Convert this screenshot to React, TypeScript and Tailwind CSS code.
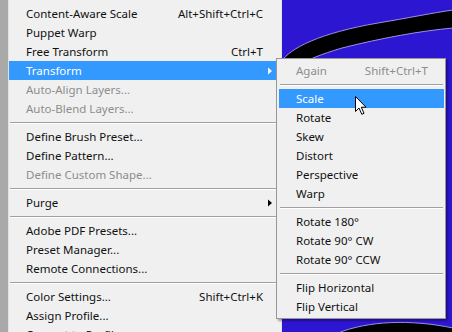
import React from "react";

type Item =
  | { sep: true }
  | { label: string; keys?: string; disabled?: boolean; sub?: boolean; active?: boolean };

const mainItems: Item[] = [
  { label: "Content-Aware Scale", keys: "Alt+Shift+Ctrl+C" },
  { label: "Puppet Warp" },
  { label: "Free Transform", keys: "Ctrl+T" },
  { label: "Transform", sub: true, active: true },
  { label: "Auto-Align Layers...", disabled: true },
  { label: "Auto-Blend Layers...", disabled: true },
  { sep: true },
  { label: "Define Brush Preset..." },
  { label: "Define Pattern..." },
  { label: "Define Custom Shape...", disabled: true },
  { sep: true },
  { label: "Purge", sub: true },
  { sep: true },
  { label: "Adobe PDF Presets..." },
  { label: "Preset Manager..." },
  { label: "Remote Connections..." },
  { sep: true },
  { label: "Color Settings...", keys: "Shift+Ctrl+K" },
  { label: "Assign Profile..." },
  { label: "Convert to Profile..." },
];

const subItems: Item[] = [
  { label: "Again", keys: "Shift+Ctrl+T", disabled: true },
  { sep: true },
  { label: "Scale", active: true },
  { label: "Rotate" },
  { label: "Skew" },
  { label: "Distort" },
  { label: "Perspective" },
  { label: "Warp" },
  { sep: true },
  { label: "Rotate 180°" },
  { label: "Rotate 90° CW" },
  { label: "Rotate 90° CCW" },
  { sep: true },
  { label: "Flip Horizontal" },
  { label: "Flip Vertical" },
];

function Arrow({ white }: { white?: boolean }) {
  return (
    <svg width="4" height="8" viewBox="0 0 4 8" className="-mr-[9px]">
      <path d="M0 0.5 L4 4 L0 7.5 Z" fill={white ? "#ffffff" : "#000000"} />
    </svg>
  );
}

function Rows({ items, pl, pr }: { items: Item[]; pl: string; pr: string }) {
  return (
    <>
      {items.map((it, i) => {
        if ("sep" in it) {
          return (
            <div key={i} className="h-[9px] shrink-0 flex flex-col justify-center px-[1px]">
              <div className="h-px bg-[#a0a0a0]" />
              <div className="h-px bg-white" />
            </div>
          );
        }
        const color = it.active
          ? "bg-[#3399ff] text-white"
          : it.disabled
          ? "text-[#8d8d8d]"
          : "text-[#111111]";
        return (
          <div
            key={i}
            className={`h-[19px] shrink-0 flex items-center justify-between whitespace-nowrap ${pl} ${pr} ${color}`}
          >
            <span>{it.label}</span>
            {it.keys && <span>{it.keys}</span>}
            {it.sub && <Arrow white={it.active} />}
          </div>
        );
      })}
    </>
  );
}

export default function App() {
  return (
    <div
      className="relative w-[452px] h-[332px] overflow-hidden flex bg-[#2d16d2] text-[11.5px] leading-none"
      style={{ fontFamily: '"Noto Sans", "Open Sans", sans-serif' }}
    >
      {/* window frame strip */}
      <div className="w-[8px] shrink-0 bg-[#a9a9a9]" />

      {/* main Edit menu */}
      <div className="w-[274px] shrink-0 bg-[#f0f0f0] border-l border-[#e2e2e2] border-r border-[#b8b8b8] pt-[4px] pr-[4px] flex flex-col">
        <Rows items={mainItems} pl="pl-[17px]" pr="pr-[14px]" />
      </div>

      {/* canvas art */}
      <div className="relative flex-1">
        <svg className="absolute inset-0" width="170" height="332" viewBox="282 0 170 332">
          <path
            d="M281 62 C290 48 320 33 378 23 C408 18 432 13 453 10 L453 28 C420 31 382 38 342 48 C322 54 306 60 298 66 Z"
            fill="#000000"
            stroke="#9b8ee6"
            strokeWidth="1"
          />
          <path
            d="M338 333 C368 321 410 319 453 328 L453 333 Z"
            fill="#000000"
            stroke="#9b8ee6"
            strokeWidth="1"
          />
        </svg>
      </div>

      {/* Transform submenu */}
      <div className="absolute left-[276px] top-[58px] w-[170px] bg-[#f0f0f0] border border-[#979797] pt-[2px] pb-[2px] pl-[2px] pr-[1px] shadow-[2px_2px_2px_rgba(0,0,0,0.35)] flex flex-col">
        <Rows items={subItems} pl="pl-[17px]" pr="pr-[16px]" />
      </div>

      {/* mouse pointer */}
      <svg className="absolute left-[355px] top-[96px]" width="13" height="20" viewBox="0 0 13 20">
        <path
          d="M0.5 0.5 L0.5 15.5 L4 12 L6.8 18.3 L9 17.3 L6.3 11.2 L11 11.2 Z"
          fill="#ffffff"
          stroke="#000000"
          strokeWidth="1"
          strokeLinejoin="miter"
        />
      </svg>
    </div>
  );
}
